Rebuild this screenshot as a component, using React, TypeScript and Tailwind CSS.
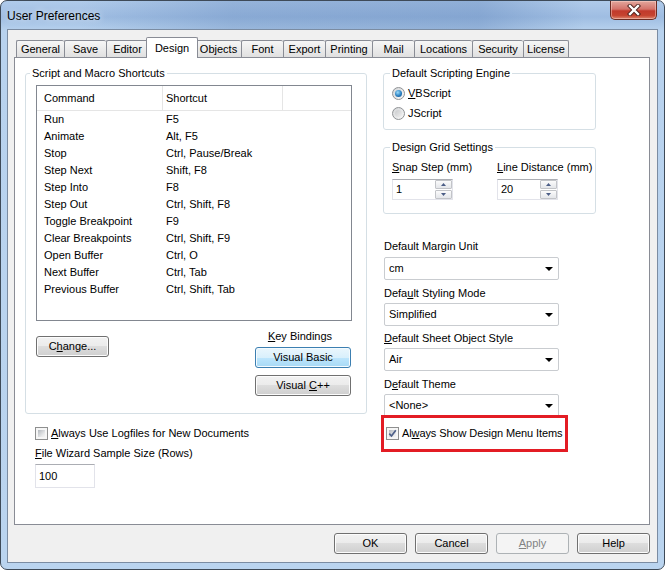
import React from 'react';

const tabs = [
  { label: 'General', w: 'w-[48px]' },
  { label: 'Save', w: 'w-[42px]' },
  { label: 'Editor', w: 'w-[42px]' },
  { label: 'Design', w: 'w-[52px]', active: true },
  { label: 'Objects', w: 'w-[46px]' },
  { label: 'Font', w: 'w-[42px]' },
  { label: 'Export', w: 'w-[42px]' },
  { label: 'Printing', w: 'w-[47px]' },
  { label: 'Mail', w: 'w-[42px]' },
  { label: 'Locations', w: 'w-[58px]' },
  { label: 'Security', w: 'w-[51px]' },
  { label: 'License', w: 'w-[46px]', last: true },
];

const shortcuts = [
  ['Run', 'F5'],
  ['Animate', 'Alt, F5'],
  ['Stop', 'Ctrl, Pause/Break'],
  ['Step Next', 'Shift, F8'],
  ['Step Into', 'F8'],
  ['Step Out', 'Ctrl, Shift, F8'],
  ['Toggle Breakpoint', 'F9'],
  ['Clear Breakpoints', 'Ctrl, Shift, F9'],
  ['Open Buffer', 'Ctrl, O'],
  ['Next Buffer', 'Ctrl, Tab'],
  ['Previous Buffer', 'Ctrl, Shift, Tab'],
];

// mnemonic underline
function Mn({ children }: { children: React.ReactNode }) {
  return <span className="underline decoration-1 underline-offset-[1px]">{children}</span>;
}

function Button({
  children,
  className = '',
  variant = 'normal',
}: {
  children: React.ReactNode;
  className?: string;
  variant?: 'normal' | 'default' | 'disabled';
}) {
  const look =
    variant === 'default'
      ? 'border-[#3c7fb1] bg-[linear-gradient(to_bottom,#eaf6fd_0%,#d9f0fc_50%,#bee6fd_50%,#a7d9f5_100%)] shadow-[inset_0_0_0_1px_#f4fbff]'
      : variant === 'disabled'
        ? 'border-[#adb2b5] bg-[#f4f4f4] text-[#838383]'
        : 'border-[#707070] bg-[linear-gradient(to_bottom,#f2f2f2_0%,#ebebeb_50%,#dddddd_50%,#cfcfcf_100%)] shadow-[inset_0_0_0_1px_#fcfcfc]';
  return (
    <button
      type="button"
      className={`flex h-[21px] items-center justify-center rounded-[3px] border leading-[13px] ${look} ${className}`}
    >
      <span className="whitespace-nowrap">{children}</span>
    </button>
  );
}

function CheckBox({ checked }: { checked?: boolean }) {
  return (
    <div className="relative h-[13px] w-[13px] shrink-0 border border-[#8e8f8f] bg-[#f6f6f6] p-[2px]">
      <div className="h-full w-full bg-[linear-gradient(135deg,#b3b8be,#e8e9ea_70%,#f4f4f4)]" />
      {checked && (
        <svg className="absolute left-[1px] top-[1px]" width="9" height="9" viewBox="0 0 9 9">
          <path d="M1.3 4.6 L3.5 7 L7.8 1.2" fill="none" stroke="#4e6089" strokeWidth="1.7" />
        </svg>
      )}
    </div>
  );
}

function Radio({ checked }: { checked?: boolean }) {
  return (
    <div className="flex h-[13px] w-[13px] shrink-0 items-center justify-center rounded-full border border-[#8f9295] bg-[linear-gradient(135deg,#d4d6d8,#f8f8f8)]">
      {checked ? (
        <div className="h-[7px] w-[7px] rounded-full bg-[radial-gradient(circle_at_40%_35%,#9bdcfb,#2a7fc0_55%,#0d4a87)]" />
      ) : (
        <div className="h-[7px] w-[7px] rounded-full bg-[linear-gradient(135deg,#c9cbcd,#efefef)]" />
      )}
    </div>
  );
}

function SpinBtn({ up }: { up?: boolean }) {
  return (
    <div className="flex h-[9px] items-center justify-center rounded-[1px] border border-[#c2c4c8] bg-[linear-gradient(to_bottom,#fbfbfb,#e4e6ea)]">
      <svg width="5" height="3" viewBox="0 0 5 3">
        <path d={up ? 'M0 3h5L2.5 0z' : 'M0 0h5L2.5 3z'} fill="#4b5d86" />
      </svg>
    </div>
  );
}

function Spinner({ value }: { value: string }) {
  return (
    <div className="mt-[5px] flex h-[21px] w-[61px] border border-[#e2e3ea] border-t-[#abadb3] bg-white">
      <span className="flex-1 pl-[3px] leading-[19px]">{value}</span>
      <div className="flex w-[17px] flex-col gap-[1px]">
        <SpinBtn up />
        <SpinBtn />
      </div>
    </div>
  );
}

function Combo({ value, className = '' }: { value: string; className?: string }) {
  return (
    <div
      className={`ml-[1px] flex h-[23px] w-[175px] items-center justify-between rounded-[2px] border border-[#c9ccd0] bg-white pl-[4px] pr-[5px] ${className}`}
    >
      <span>{value}</span>
      <svg width="8" height="4" viewBox="0 0 8 4">
        <path d="M0 0h8L4 4z" fill="#000" />
      </svg>
    </div>
  );
}

export default function App() {
  return (
    <div className="flex h-[570px] w-[665px] flex-col overflow-hidden rounded-[7px] border border-[#3e4a58] bg-[linear-gradient(to_bottom,#b0cbea_0px,#9fbde2_16px,#b8d2ee_30px,#bad4ef_100%)] font-['Liberation_Sans',Arial,sans-serif] text-[11px] leading-[13px] text-black">
      {/* Title bar */}
      <div className="flex h-[28px] shrink-0 items-start justify-between bg-[linear-gradient(to_right,transparent_12%,rgba(70,110,170,0.25)_35%,rgba(70,110,170,0.3)_72%,transparent_88%)] pl-[6px] pr-[7px]">
        <span className="mt-[8px] text-[12px] leading-[14px] [text-shadow:0_0_6px_rgba(255,255,255,0.9)]">
          User Preferences
        </span>
        <div className="flex h-[19px] w-[47px] items-center justify-center rounded-b-[5px] border border-t-0 border-[#6b2b22] bg-[linear-gradient(to_bottom,#e3a79d_0%,#d4736a_45%,#c13a2c_55%,#c5432f_80%,#dc866f_100%)] shadow-[inset_0_0_0_1px_rgba(255,220,210,0.45)]">
          <svg width="14" height="12" viewBox="0 0 14 12">
            <path d="M3 2 L11 10 M11 2 L3 10" stroke="#4a1f1a" strokeWidth="4.2" strokeLinecap="square" />
            <path d="M3 2 L11 10 M11 2 L3 10" stroke="#ffffff" strokeWidth="2.4" strokeLinecap="square" />
          </svg>
        </div>
      </div>

      {/* Client area */}
      <div className="mx-[6px] mb-[6px] flex flex-1 flex-col border border-[#7b8ca2] bg-[#f0f0f0] pl-[6px] pr-[7px] pt-[7px]">
        {/* Tabs */}
        <div className="flex h-[20px] items-end pl-[2px]">
          {tabs.map((t) =>
            t.active ? (
              <div
                key={t.label}
                className={`relative z-10 -mb-px -ml-[2px] -mr-[3px] flex h-[21px] items-center justify-center rounded-t-[2px] border border-b-0 border-[#898c95] bg-white ${t.w}`}
              >
                {t.label}
              </div>
            ) : (
              <div
                key={t.label}
                className={`flex h-[17px] items-center justify-center rounded-t-[2px] border-l border-t border-[#898c95] bg-[linear-gradient(to_bottom,#f6f6f6,#e0e0e0)] ${t.last ? 'border-r' : ''} ${t.w}`}
              >
                {t.label}
              </div>
            ),
          )}
        </div>

        {/* Tab panel */}
        <div className="flex h-[468px] border border-[#898c95] bg-white">
          {/* Left column */}
          <div className="ml-[10px] flex w-[342px] flex-col">
            <fieldset className="mt-[9px] rounded-[3px] border border-[#d5dfe5]">
              <legend className="ml-[4px] px-[2px] leading-[13px]">Script and Macro Shortcuts</legend>
              <div className="flex flex-col pb-[17px]">
                {/* List view */}
                <div className="ml-[10px] mt-[5px] h-[236px] w-[316px] border border-[#828790] bg-white">
                  <div className="flex h-[25px] border-b border-[#e5e5e5]">
                    <div className="flex w-[126px] items-center border-r border-[#e5e5e5] pl-[7px]">Command</div>
                    <div className="flex w-[120px] items-center border-r border-[#e5e5e5] pl-[3px]">Shortcut</div>
                    <div className="flex-1" />
                  </div>
                  {shortcuts.map(([cmd, key]) => (
                    <div key={cmd} className="flex h-[17px] items-center">
                      <div className="w-[126px] pl-[7px]">{cmd}</div>
                      <div className="w-[120px] pl-[3px]">{key}</div>
                    </div>
                  ))}
                </div>

                <div className="flex items-start justify-between">
                  <Button className="ml-[10px] mt-[15px] w-[73px]">
                    C<Mn>h</Mn>ange...
                  </Button>
                  <div className="mr-[15px] flex w-[96px] flex-col items-center">
                    <span className="mt-[9px] -ml-[6px]">
                      <Mn>K</Mn>ey Bindings
                    </span>
                    <Button variant="default" className="mt-[4px] w-[96px]">
                      Visual Basic
                    </Button>
                    <Button className="mt-[7px] w-[96px]">
                      Visual <Mn>C</Mn>++
                    </Button>
                  </div>
                </div>
              </div>
            </fieldset>

            <div className="ml-[10px] mt-[13px] flex h-[13px] items-center">
              <CheckBox />
              <span className="ml-[3px]">
                <Mn>A</Mn>lways Use Logfiles for New Documents
              </span>
            </div>
            <span className="ml-[10px] mt-[7px]">
              <Mn>F</Mn>ile Wizard Sample Size (Rows)
            </span>
            <div className="ml-[10px] mt-[4px] flex h-[24px] w-[60px] items-center border border-[#e2e3ea] border-t-[#abadb3] bg-white pl-[3px]">
              100
            </div>
          </div>

          {/* Right column */}
          <div className="ml-[16px] flex w-[213px] flex-col">
            <fieldset className="mt-[9px] rounded-[3px] border border-[#d5dfe5]">
              <legend className="ml-[6px] px-[2px] leading-[13px]">Default Scripting Engine</legend>
              <div className="flex flex-col pb-[6px] pl-[8px] pt-[3px]">
                <div className="flex h-[20px] items-center">
                  <Radio checked />
                  <span className="ml-[3px]">
                    <Mn>V</Mn>BScript
                  </span>
                </div>
                <div className="flex h-[20px] items-center">
                  <Radio />
                  <span className="ml-[3px]">JScript</span>
                </div>
              </div>
            </fieldset>

            <fieldset className="mt-[11px] rounded-[3px] border border-[#d5dfe5]">
              <legend className="ml-[6px] px-[2px] leading-[13px]">Design Grid Settings</legend>
              <div className="flex pb-[13px] pl-[8px]">
                <div className="flex w-[105px] flex-col">
                  <span className="mt-[7px]">
                    <Mn>S</Mn>nap Step (mm)
                  </span>
                  <Spinner value="1" />
                </div>
                <div className="flex flex-col">
                  <span className="mt-[7px] whitespace-nowrap">
                    <Mn>L</Mn>ine Distance (mm)
                  </span>
                  <Spinner value="20" />
                </div>
              </div>
            </fieldset>

            <span className="ml-[1px] mt-[26px]">Default Margin Unit</span>
            <Combo value="cm" className="mt-[4px]" />
            <span className="ml-[1px] mt-[7px]">
              Defa<Mn>u</Mn>lt Styling Mode
            </span>
            <Combo value="Simplified" className="mt-[3px]" />
            <span className="ml-[1px] mt-[6px]">
              <Mn>D</Mn>efault Sheet Object Style
            </span>
            <Combo value="Air" className="mt-[3px]" />
            <span className="ml-[1px] mt-[7px]">
              D<Mn>e</Mn>fault Theme
            </span>
            <Combo value="<None>" className="mt-[3px]" />

            <div className="relative z-10 -ml-[2px] -mt-[2px] flex h-[37px] w-[187px] items-center border-[3px] border-[#e31c24] pl-[2px]">
              <CheckBox checked />
              <span className="ml-[3px] whitespace-nowrap tracking-[-0.1px]">
                Al<Mn>w</Mn>ays Show Design Menu Items
              </span>
            </div>
          </div>
        </div>

        {/* Dialog buttons */}
        <div className="mt-[8px] flex justify-end gap-[8px]">
          <Button className="w-[73px]">OK</Button>
          <Button className="w-[73px]">Cancel</Button>
          <Button variant="disabled" className="w-[73px]">
            <Mn>A</Mn>pply
          </Button>
          <Button className="w-[73px]">Help</Button>
        </div>
      </div>
    </div>
  );
}
